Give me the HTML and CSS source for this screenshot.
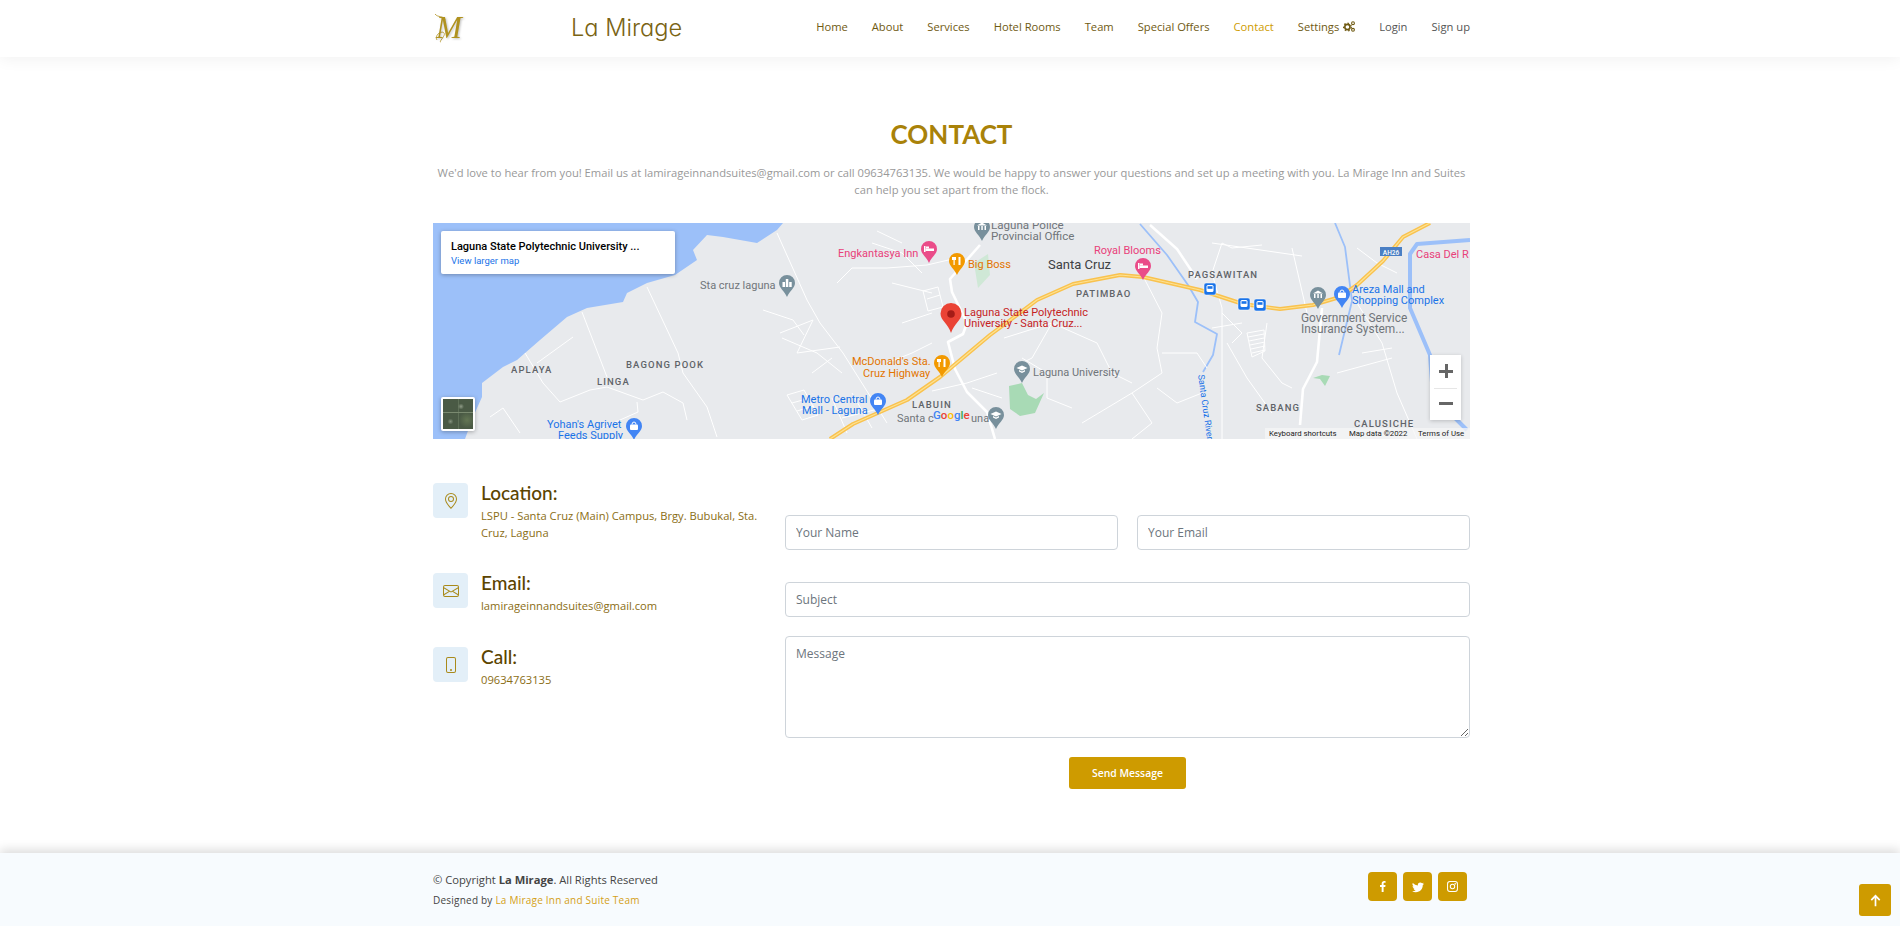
FILE: index.html
```html
<!DOCTYPE html>
<html lang="en">
<head>
  <meta charset="UTF-8" />
  <meta name="viewport" content="width=device-width, initial-scale=1.0"/>
  <title>La Mirage - Contact</title>
  <link rel="stylesheet" href="styles.css">
</head>
<body>
  <header class="site-header">
    <div class="container header-row">
      <a class="logo" href="#">
        <svg width="36" height="34" viewBox="0 0 36 34">
          <path d="M1 3c3 4 8 1 10 6M3 29c-3-5 5-10 7-7s-6 9-3 9" class="logo-swash"/>
          <text x="2" y="27" class="logo-m">M</text>
        </svg>
      </a>
      <a class="brand" href="#">La Mirage</a>
      <nav class="main-nav">
        <a href="#">Home</a>
        <a href="#">About</a>
        <a href="#">Services</a>
        <a href="#">Hotel Rooms</a>
        <a href="#">Team</a>
        <a href="#">Special Offers</a>
        <a href="#" class="active">Contact</a>
        <a href="#" class="with-icon">Settings
          <svg width="12" height="11" viewBox="0 0 12 11">
            <circle cx="4.4" cy="6" r="2.6" class="gear"/>
            <circle cx="4.4" cy="6" r="3.9" class="gear-teeth"/>
            <circle cx="10" cy="2.2" r="1.4" class="gear-small"/>
            <circle cx="10" cy="8.8" r="1.4" class="gear-small"/>
          </svg>
        </a>
        <a href="#" class="plain">Login</a>
        <a href="#" class="plain">Sign up</a>
      </nav>
    </div>
  </header>

  <main class="container contact">
    <h2>CONTACT</h2>
    <p class="intro">We'd love to hear from you! Email us at lamirageinnandsuites@gmail.com or call 09634763135. We would be happy to answer your questions and set up a meeting with you. La Mirage Inn and Suites can help you set apart from the flock.</p>

    <div class="map">
      <svg class="map-art" width="1038" height="216" viewBox="0 0 1038 216">
        <defs>
          <symbol id="pin" viewBox="0 0 16 22" overflow="visible">
            <path d="M8 0a8 8 0 0 1 8 8c0 5-5.500 8-8 14C5.500 16 0 13 0 8a8 8 0 0 1 8-8z" fill="currentColor"/>
          </symbol>
          <g id="g-food" fill="#fff"><rect x="-3.500" y="-4" width="1.200" height="8"/><rect x="1.500" y="-4" width="2" height="8"/><rect x="-5" y="-4" width="4" height="3"/></g>
          <g id="g-bed" fill="#fff"><rect x="-5" y="-3" width="1.500" height="6"/><rect x="-3.500" y="-.5" width="8.500" height="2.500"/><rect x="-3" y="-2.500" width="3" height="2"/></g>
          <g id="g-bank" fill="#fff"><path d="M-5-1.500 0-4.500l5 3z"/><rect x="-4" y="-1" width="1.500" height="4"/><rect x="-.7" y="-1" width="1.500" height="4"/><rect x="2.500" y="-1" width="1.500" height="4"/></g>
          <g id="g-bag" fill="#fff"><rect x="-4" y="-1.500" width="8" height="5.500" rx="1"/><path d="M-2-1.500a2 2.500 0 0 1 4 0" fill="none" stroke="#fff"/></g>
          <g id="g-cap" fill="#fff"><path d="M-5.500-1 0-3.500 5.500-1 0 1.500z"/><path d="M-3 1v1.500L0 4l3-1.500V1L0 2.500z"/></g>
          <g id="g-city" fill="#fff"><rect x="-4.500" y="-1" width="2.500" height="5"/><rect x="-1.200" y="-4" width="2.500" height="8"/><rect x="2.200" y="-1" width="2.500" height="5"/></g>
          <g id="bus"><rect x="-6" y="-6" width="12" height="12" rx="2" fill="#1a73e8" stroke="#fff" stroke-width=".5"/><rect x="-3.500" y="-4" width="7" height="7" rx="1.500" fill="#fff"/><rect x="-2.500" y="-2.800" width="5" height="2.600" fill="#1a73e8"/></g>
        </defs>

        <path class="water" d="M351 0 345 7 325 20 291 14 275 12 261 27 265 37 243 52 215 60 195 70 191 79 155 85 135 94 108 117 85 137 71 144 50 160 50 174 41 194 33 216H0V0z"/>
        <path class="water-line" d="M1038 17 985 21 978 31 978 85 998 132 1001 173 1035 207"/>
        <path class="water-line thin" d="M708 1 735 32 756 62 766 79 763 99 785 111 781 132 771 149"/>
        <path class="water-line thin" d="M903 0 913 24 920 78 907 132"/>

        <path class="park" d="M577 163 590 160 596 172 604 176 612 170 603 190 588 193 578 186z"/>
        <path class="park pale" d="M542 40 556 31 558 52 546 65z"/>
        <path class="park" d="M881 155 890 152 898 153 893 163 888 156z"/>

        <g class="roads">
          <path d="M345 10 375 77 388 100 411 130 455 200M150 89 175 154M215 64 246 130 251 150 275 184 285 214"/>
          <path d="M93 130 111 160 128 179 158 167 175 164 211 177 231 169 251 180 255 197M141 114 105 140M58 194 71 185 88 210M205 179 206 189 170 205"/>
          <path d="M348 110 381 97 365 130 408 124M331 87 361 97 372 112M350 115 385 130 410 150M380 150 400 135M405 60 420 45 455 45 495 42 525 35"/>
          <path d="M440 20 470 30 490 50M445 8 470 20M460 60 500 70M470 100 500 90M455 140 480 130 500 120"/>
          <path d="M400 175 415 210M420 170 440 205M410 195 450 185M500 168 535 160 565 150M540 165 570 175M590 135 615 150 615 175 640 185"/>
          <path d="M572 115 620 100 665 120 680 150 700 160M620 100 600 135 590 140"/>
          <path d="M712 55 730 90 725 125 730 150 700 170 720 200 700 216M730 130 765 130 775 145M650 200 700 170M725 165 745 180 770 170"/>
          <path d="M790 20 780 50 790 85 790 216M780 20 870 33M790 20 800 25 830 22M860 25 875 90M795 120 815 155 840 190M835 100 830 135 850 160 860 165"/>
          <path d="M790 90 810 110 800 120M780 105 810 100M815 110 832 107 833 128 820 134z"/>
          <path d="M816 114 832 111M817 118 832 115M818 122 833 119M819 126 833 123M820 130 833 127"/>
          <path d="M925 80 950 120 965 170 985 216M930 130 960 125M905 150 960 135M925 25 945 40 965 50"/>
          <path d="M355 172 372 167 386 192 370 197zM360 180 378 175M365 188 382 183M491 68 506 64 511 84 496 88zM495 76 508 72"/>
        </g>
        <path class="road-main" d="M718 2 745 26 765 56"/>
        <path class="road-main" d="M548 22 518 56 520 69 535 100 531 111 516 119 523 146 535 169 555 189 563 216"/>
        <path class="road-main" d="M890 85 885 139 871 166 868 202"/>

        <path class="highway" d="M398 216 421 201 448 189 475 177 508 154 558 112 605 77 641 61 688 52 711 54 768 67 811 81 848 86 881 82 908 74 925 62 951 38 971 14 998 0"/>
        <path class="highway-core" d="M398 216 421 201 448 189 475 177 508 154 558 112 605 77 641 61 688 52 711 54 768 67 811 81 848 86 881 82 908 74 925 62 951 38 971 14 998 0"/>

        <use href="#bus" x="778" y="66"/>
        <use href="#bus" x="812" y="81"/>
        <use href="#bus" x="828" y="82"/>
        <rect x="948" y="24" width="22" height="9" fill="#4a7fc4"/>
        <text x="959" y="31.500" class="shield">AH26</text>

        <g class="pin-pink">
          <use href="#pin" x="489" y="18" width="16" height="22"/><use href="#g-bed" x="497" y="26"/>
          <use href="#pin" x="703" y="35" width="16" height="22"/><use href="#g-bed" x="711" y="43"/>
        </g>
        <g class="pin-orange">
          <use href="#pin" x="517" y="30" width="16" height="22"/><use href="#g-food" x="525" y="38"/>
          <use href="#pin" x="502" y="132" width="16" height="22"/><use href="#g-food" x="510" y="140"/>
        </g>
        <g class="pin-grey">
          <use href="#pin" x="542" y="-4" width="16" height="22"/><use href="#g-bank" x="550" y="4"/>
          <use href="#pin" x="347" y="52" width="16" height="22"/><use href="#g-city" x="355" y="60"/>
          <use href="#pin" x="582" y="138" width="16" height="22"/><use href="#g-cap" x="590" y="146"/>
          <use href="#pin" x="556" y="184" width="16" height="22"/><use href="#g-cap" x="564" y="192"/>
          <use href="#pin" x="878" y="64" width="16" height="22"/><use href="#g-bank" x="886" y="72"/>
        </g>
        <g class="pin-blue">
          <use href="#pin" x="438" y="170" width="16" height="22"/><use href="#g-bag" x="446" y="178"/>
          <use href="#pin" x="194" y="195" width="16" height="22"/><use href="#g-bag" x="202" y="203"/>
          <use href="#pin" x="902" y="63" width="16" height="22"/><use href="#g-bag" x="910" y="71"/>
        </g>
        <path class="pin-red" d="M519 80a10.500 10.500 0 0 1 10.500 10.500c0 7-7.500 10-10.500 19.500-3-9.500-10.500-12.500-10.500-19.500A10.500 10.500 0 0 1 519 80z"/>
        <circle cx="519" cy="91" r="3.800" fill="#a51c17"/>

        <g class="lbl-pink">
          <text x="406" y="34">Engkantasya Inn</text>
          <text x="662" y="31">Royal Blooms</text>
          <text x="984" y="35">Casa Del R</text>
        </g>
        <g class="lbl-orange">
          <text x="536" y="45">Big Boss</text>
          <text x="420" y="142">McDonald's Sta.</text>
          <text x="431" y="154">Cruz Highway</text>
        </g>
        <g class="lbl-grey">
          <text x="268" y="66">Sta cruz laguna</text>
          <text x="601" y="153">Laguna University</text>
          <text x="465" y="199">Santa c</text>
          <text x="539" y="199">una</text>
        </g>
        <g class="lbl-grey wide">
          <text x="559" y="6">Laguna Police</text>
          <text x="559" y="17">Provincial Office</text>
        </g>
        <g class="lbl-grey wider">
          <text x="869" y="99">Government Service</text>
          <text x="869" y="110">Insurance System...</text>
        </g>
        <g class="lbl-blue">
          <text x="369" y="180">Metro Central</text>
          <text x="370" y="191">Mall - Laguna</text>
          <text x="115" y="205">Yohan's Agrivet</text>
          <text x="126" y="216">Feeds Supply</text>
          <text x="920" y="70">Areza Mall and</text>
          <text x="920" y="81">Shopping Complex</text>
        </g>
        <g class="lbl-red">
          <text x="532" y="93">Laguna State Polytechnic</text>
          <text x="532" y="104">University - Santa Cruz...</text>
        </g>
        <text x="616" y="46" class="lbl-town">Santa Cruz</text>
        <g class="lbl-area">
          <text x="79" y="150">APLAYA</text>
          <text x="194" y="145">BAGONG POOK</text>
          <text x="165" y="162">LINGA</text>
          <text x="480" y="185">LABUIN</text>
          <text x="644" y="74">PATIMBAO</text>
          <text x="756" y="55">PAGSAWITAN</text>
          <text x="824" y="188">SABANG</text>
          <text x="922" y="204">CALUSICHE</text>
        </g>
        <text class="lbl-river" transform="translate(766 152) rotate(82)">Santa Cruz River</text>
        <text x="501" y="196" class="google"><tspan fill="#4285f4">G</tspan><tspan fill="#ea4335">o</tspan><tspan fill="#fbbc05">o</tspan><tspan fill="#4285f4">g</tspan><tspan fill="#34a853">l</tspan><tspan fill="#ea4335">e</tspan></text>

        <rect x="833" y="205" width="205" height="11" fill="#f5f5f5" opacity=".75"/>
        <g class="attrib">
          <text x="837" y="213">Keyboard shortcuts</text>
          <text x="917" y="213">Map data ©2022</text>
          <text x="986" y="213">Terms of Use</text>
        </g>
      </svg>

      <div class="map-card">
        <div class="map-card-title">Laguna State Polytechnic University ...</div>
        <a href="#" class="map-card-link">View larger map</a>
      </div>

      <div class="map-sat"></div>

      <div class="map-zoom">
        <button type="button" class="zoom-plus"><span></span><span></span></button>
        <button type="button" class="zoom-minus"><span></span></button>
      </div>
    </div>

    <div class="contact-grid">
      <div class="info">
        <div class="info-item">
          <div class="info-icon">
            <svg width="16" height="16" viewBox="0 0 16 16"><path d="M12.166 8.94c-.524 1.062-1.234 2.12-1.960 3.070A31.493 31.493 0 0 1 8 14.580a31.481 31.481 0 0 1-2.206-2.570c-.726-.950-1.436-2.008-1.960-3.070C3.304 7.867 3 6.862 3 6a5 5 0 0 1 10 0c0 .862-.305 1.867-.834 2.940zM8 16s6-5.686 6-10A6 6 0 0 0 2 6c0 4.314 6 10 6 10z"/><path d="M8 8a2 2 0 1 1 0-4 2 2 0 0 1 0 4zm0 1a3 3 0 1 0 0-6 3 3 0 0 0 0 6z"/></svg>
          </div>
          <div>
            <h4>Location:</h4>
            <p>LSPU - Santa Cruz (Main) Campus, Brgy. Bubukal, Sta. Cruz, Laguna</p>
          </div>
        </div>
        <div class="info-item">
          <div class="info-icon">
            <svg width="16" height="16" viewBox="0 0 16 16"><path d="M0 4a2 2 0 0 1 2-2h12a2 2 0 0 1 2 2v8a2 2 0 0 1-2 2H2a2 2 0 0 1-2-2V4Zm2-1a1 1 0 0 0-1 1v.217l7 4.200 7-4.200V4a1 1 0 0 0-1-1H2Zm13 2.383-4.708 2.825L15 11.105V5.383Zm-.034 6.876-5.640-3.471L8 9.583l-1.326-.795-5.640 3.470A1 1 0 0 0 2 13h12a1 1 0 0 0 .966-.741ZM1 11.105l4.708-2.897L1 5.383v5.722Z"/></svg>
          </div>
          <div>
            <h4>Email:</h4>
            <p>lamirageinnandsuites@gmail.com</p>
          </div>
        </div>
        <div class="info-item">
          <div class="info-icon">
            <svg width="16" height="16" viewBox="0 0 16 16"><path d="M11 1a1 1 0 0 1 1 1v12a1 1 0 0 1-1 1H5a1 1 0 0 1-1-1V2a1 1 0 0 1 1-1h6zM5 0a2 2 0 0 0-2 2v12a2 2 0 0 0 2 2h6a2 2 0 0 0 2-2V2a2 2 0 0 0-2-2H5z"/><path d="M8 14a1 1 0 1 0 0-2 1 1 0 0 0 0 2z"/></svg>
          </div>
          <div>
            <h4>Call:</h4>
            <p>09634763135</p>
          </div>
        </div>
      </div>

      <form class="contact-form">
        <div class="form-row">
          <input type="text" placeholder="Your Name" />
          <input type="email" placeholder="Your Email" />
        </div>
        <input type="text" class="subject" placeholder="Subject" />
        <textarea placeholder="Message"></textarea>
        <div class="form-submit">
          <button type="submit">Send Message</button>
        </div>
      </form>
    </div>
  </main>

  <footer class="site-footer">
    <div class="container footer-row">
      <div>
        <div class="copyright">© Copyright <strong>La Mirage</strong>. All Rights Reserved</div>
        <div class="credits">Designed by <a href="#">La Mirage Inn and Suite Team</a></div>
      </div>
      <div class="social">
        <a href="#"><svg width="11" height="11" viewBox="0 0 16 16"><path d="M9.600 16V8.700h2.400l.4-2.800H9.600V4.100c0-.8.2-1.400 1.400-1.400h1.500V.2C12.200.1 11.400 0 10.400 0 8.300 0 6.800 1.300 6.800 3.700v2.200H4.400v2.800h2.400V16z"/></svg></a>
        <a href="#"><svg width="12" height="12" viewBox="0 0 16 16"><path d="M5.026 15c6.038 0 9.341-5.003 9.341-9.334 0-.14 0-.282-.006-.422A6.685 6.685 0 0 0 16 3.542a6.658 6.658 0 0 1-1.889.518 3.301 3.301 0 0 0 1.447-1.817 6.533 6.533 0 0 1-2.087.793A3.286 3.286 0 0 0 7.875 6.030a9.325 9.325 0 0 1-6.767-3.429 3.289 3.289 0 0 0 1.018 4.382A3.323 3.323 0 0 1 .64 6.575v.045a3.288 3.288 0 0 0 2.632 3.218 3.203 3.203 0 0 1-.865.115 3.230 3.230 0 0 1-.614-.057 3.283 3.283 0 0 0 3.067 2.277A6.588 6.588 0 0 1 .78 13.580a6.320 6.320 0 0 1-.78-.045A9.344 9.344 0 0 0 5.026 15z"/></svg></a>
        <a href="#"><svg width="11" height="11" viewBox="0 0 12 12" class="insta"><rect x=".6" y=".6" width="10.800" height="10.800" rx="2.600"/><circle cx="6" cy="6" r="2.400"/><circle cx="9" cy="3" r=".4"/></svg></a>
      </div>
    </div>
  </footer>

  <a href="#" class="back-to-top">
    <svg width="15" height="15" viewBox="0 0 16 16"><path d="M8 14V3M3.500 7.500 8 3l4.500 4.500"/></svg>
  </a>
</body>
</html>
```

FILE: styles.css
```css
* {
  box-sizing: border-box;
}

body {
  margin: 0;
  font-family: "Open Sans", sans-serif;
  font-size: 11.2px;
  color: #444;
  background: #fff;
}

a {
  text-decoration: none;
  color: inherit;
}

.container {
  width: 1037px;
  margin-left: 433px;
}

/* header */
.site-header {
  height: 57px;
  background: #fff;
  box-shadow: 0 2px 15px rgba(0, 0, 0, 0.06);
}

.header-row {
  height: 55px;
  display: flex;
  align-items: center;
}

.logo {
  width: 138px;
  height: 34px;
  padding-left: 1px;
}

.logo-m {
  font-family: "Liberation Serif", serif;
  font-style: italic;
  font-size: 31px;
  fill: #b0921f;
  filter: drop-shadow(1px 1px 1px rgba(0, 0, 0, 0.25));
}

.logo-swash {
  fill: none;
  stroke: #b0921f;
  stroke-width: 0.8;
}

.brand {
  font-family: "Inter", sans-serif;
  font-feature-settings: "cv11";
  font-weight: 300;
  font-size: 23.6px;
  color: #7a6414;
}

.main-nav {
  margin-left: auto;
  margin-bottom: 2px;
  display: flex;
  gap: 24px;
  color: #6f5a12;
}

.main-nav a.active {
  color: #ce9b00;
}

.main-nav a.plain {
  color: #555;
}

.with-icon svg {
  vertical-align: -1px;
  margin-left: 1px;
}

.gear {
  fill: none;
  stroke: #6f5a12;
  stroke-width: 1.6;
}

.gear-teeth {
  fill: none;
  stroke: #6f5a12;
  stroke-width: 1.2;
  stroke-dasharray: 1.6 2;
}

.gear-small {
  fill: none;
  stroke: #6f5a12;
  stroke-width: 1.1;
}

/* contact */
.contact {
  padding-top: 62px;
  padding-bottom: 64px;
}

.contact h2 {
  margin: 0;
  text-align: center;
  font-family: "Lato", sans-serif;
  font-weight: 700;
  font-size: 26px;
  line-height: 31px;
  color: #a98209;
}

.intro {
  margin: 14px 0 25px;
  text-align: center;
  line-height: 17px;
  color: #999;
}

/* map */
.map {
  position: relative;
  height: 216px;
  background: #e8eaed;
  overflow: hidden;
}

.map-art {
  display: block;
  margin-left: -1px;
  font-family: "Roboto", sans-serif;
}

.water {
  fill: #9cc0f9;
}

.water-line {
  fill: none;
  stroke: #9cc0f9;
  stroke-width: 4;
  stroke-linejoin: round;
}

.water-line.thin {
  stroke-width: 1.8;
}

.park {
  fill: #a8dab5;
}

.park.pale {
  fill: #cfe8d6;
}

.roads path {
  fill: none;
  stroke: #fff;
  stroke-width: 1;
  stroke-linejoin: round;
}

.road-main {
  fill: none;
  stroke: #fff;
  stroke-width: 2.6;
  stroke-linejoin: round;
}

.highway {
  fill: none;
  stroke: #f9c24e;
  stroke-width: 4;
  stroke-linejoin: round;
}

.highway-core {
  fill: none;
  stroke: #fde293;
  stroke-width: 1.2;
  stroke-linejoin: round;
}

.shield {
  font-size: 6.500px;
  font-weight: 500;
  fill: #fff;
  text-anchor: middle;
}

.pin-pink { color: #ea4c89; }
.pin-orange { color: #f29900; }
.pin-grey { color: #78909c; }
.pin-blue { color: #4285f4; }
.pin-red { fill: #ea4335; }

.lbl-pink, .lbl-orange, .lbl-grey, .lbl-blue, .lbl-red {
  font-size: 11px;
}

.lbl-pink { fill: #e8407a; }
.lbl-orange { fill: #e37400; }
.lbl-grey { fill: #70757a; }
.lbl-blue { fill: #1a73e8; }
.lbl-red { fill: #c5221f; }

.lbl-grey.wide {
  font-size: 11.600px;
}

.lbl-grey.wider {
  font-size: 11.900px;
}

.lbl-town {
  font-size: 13px;
  fill: #3c4043;
}

.lbl-area {
  font-size: 9.500px;
  font-weight: 500;
  letter-spacing: 1.100px;
  fill: #5f6368;
}

.lbl-river {
  font-size: 9px;
  fill: #1a73e8;
}

.google {
  font-size: 11.500px;
  font-weight: 500;
}

.attrib {
  font-size: 7.800px;
  fill: #222;
}

.map-card {
  position: absolute;
  left: 8px;
  top: 8px;
  width: 234px;
  height: 43px;
  padding: 9px 10px 0;
  background: #fff;
  border-radius: 2px;
  box-shadow: 0 1px 4px rgba(0, 0, 0, 0.3);
  font-family: "Roboto", sans-serif;
}

.map-card-title {
  font-size: 11px;
  font-weight: 500;
  line-height: 14px;
  color: #000;
}

.map-card-link {
  display: block;
  font-size: 9.500px;
  line-height: 14px;
  color: #1a73e8;
}

.map-sat {
  position: absolute;
  left: 8px;
  bottom: 8px;
  width: 34px;
  height: 34px;
  border: 2px solid #fff;
  border-radius: 2px;
  box-shadow: 0 1px 4px rgba(0, 0, 0, 0.3);
  background:
    radial-gradient(circle at 60% 25%, rgba(190, 200, 180, 0.6) 0, transparent 3px),
    radial-gradient(circle at 25% 75%, rgba(190, 200, 180, 0.5) 0, transparent 3px),
    radial-gradient(circle at 80% 70%, rgba(110, 130, 90, 0.7) 0, transparent 8px),
    linear-gradient(#7a8a70, #7a8a70) 0 13px / 100% 1px no-repeat,
    linear-gradient(#5f7058, #5f7058) 15px 0 / 1px 100% no-repeat,
    #4a5a45;
}

.map-zoom {
  position: absolute;
  right: 9px;
  top: 132px;
  width: 31px;
  height: 65px;
  background: #fff;
  box-shadow: 0 1px 4px rgba(0, 0, 0, 0.2);
  display: flex;
  flex-direction: column;
}

.map-zoom button {
  position: relative;
  flex: 1;
  padding: 0;
  border: 0;
  background: none;
}

.zoom-minus::before {
  content: "";
  position: absolute;
  left: 4px;
  right: 4px;
  top: 0;
  height: 1px;
  background: #e6e6e6;
}

.map-zoom span {
  position: absolute;
  left: 9px;
  top: 14.500px;
  width: 14px;
  height: 3px;
  background: #666;
}

.zoom-plus span:last-child {
  left: 14.500px;
  top: 9px;
  width: 3px;
  height: 14px;
}

/* info + form */
.contact-grid {
  margin-top: 44px;
  display: grid;
  grid-template-columns: 352px 685px;
}

.info-item {
  display: flex;
  gap: 13px;
  padding-right: 19px;
  margin-bottom: 33px;
}

.info-item:first-child {
  margin-bottom: 32px;
}

.info-icon {
  flex: none;
  width: 35px;
  height: 35px;
  display: flex;
  align-items: center;
  justify-content: center;
  background: #e3eff8;
  border-radius: 4px;
}

.info-icon svg {
  fill: #a98a1b;
}

.info h4 {
  margin: 0 0 4px;
  font-family: "Lato", sans-serif;
  font-weight: 500;
  font-size: 19px;
  line-height: 20px;
  color: #5c4400;
}

.info p {
  margin: 0;
  line-height: 17px;
  color: #8a6d14;
}

.contact-form {
  padding-top: 32px;
}

.form-row {
  display: flex;
  gap: 19px;
}

.contact-form input,
.contact-form textarea {
  display: block;
  width: 100%;
  height: 35px;
  padding: 0 10px;
  border: 1px solid #ced4da;
  border-radius: 4px;
  background: #fff;
  font-family: "Open Sans", sans-serif;
  font-size: 12px;
  color: #495057;
}

.contact-form ::placeholder {
  color: #6c757d;
  opacity: 1;
}

.contact-form .subject {
  margin-top: 32px;
}

.contact-form textarea {
  margin-top: 19px;
  height: 102px;
  padding: 8px 10px;
}

.form-submit {
  margin-top: 19px;
  text-align: center;
}

.form-submit button {
  width: 117px;
  height: 32px;
  padding: 0;
  border: 0;
  border-radius: 3px;
  background: #ce9b00;
  color: #fff;
  font-family: "Open Sans", sans-serif;
  font-size: 10.400px;
  font-weight: 600;
}

/* footer */
.site-footer {
  height: 73px;
  background: #f7fbfe;
  box-shadow: 0 -3px 10px rgba(0, 0, 0, 0.15);
}

.footer-row {
  display: flex;
  justify-content: space-between;
  padding-top: 19px;
}

.copyright {
  margin-top: -1px;
  line-height: 17px;
  color: #444;
}

.credits {
  margin-top: 2px;
  font-size: 10px;
  letter-spacing: 0.22px;
  line-height: 20px;
  color: #444;
}

.credits a {
  color: #d4a017;
}

.social {
  display: flex;
  gap: 6px;
  padding-right: 3px;
}

.social a {
  width: 29px;
  height: 29px;
  display: flex;
  align-items: center;
  justify-content: center;
  background: #ce9b00;
  border-radius: 4px;
}

.social svg {
  fill: #fff;
}

.social .insta {
  fill: none;
  stroke: #fff;
  stroke-width: 1.100;
}

.back-to-top {
  position: fixed;
  right: 9px;
  bottom: 10px;
  width: 32px;
  height: 32px;
  display: flex;
  align-items: center;
  justify-content: center;
  background: #ce9b00;
  border-radius: 3px;
}

.back-to-top svg {
  fill: none;
  stroke: #fff;
  stroke-width: 1.800;
}
```
